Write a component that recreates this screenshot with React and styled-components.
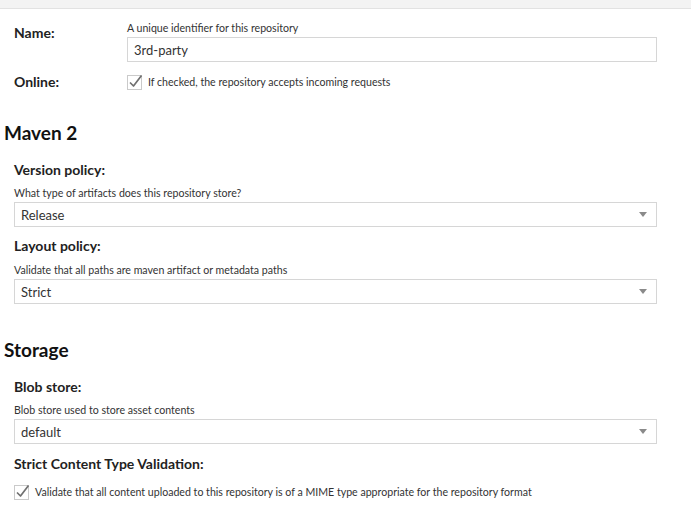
import React from 'react';
import styled, { createGlobalStyle } from 'styled-components';

const GlobalStyle = createGlobalStyle`
  html, body {
    margin: 0;
    padding: 0;
    background: #fff;
  }
  body {
    font-family: Lato, "Open Sans", Arial, sans-serif;
    color: #333;
  }
`;

const TopBar = styled.div`
  height: 8px;
  background: #f3f3f3;
  border-bottom: 1px solid #e2e2e2;
`;

const Page = styled.div`
  padding: 13px 34px 0 4px;
`;

const InlineRow = styled.div`
  display: grid;
  grid-template-columns: 113px 1fr;
  padding-left: 10px;
  margin-top: ${(p) => p.$mt || 0}px;
`;

const InlineLabel = styled.div`
  font-size: 14px;
  font-weight: 700;
  line-height: 16px;
  color: #222;
  margin-top: ${(p) => p.$mt || 0}px;
`;

const Field = styled.div`
  display: flex;
  flex-direction: column;
`;

const Helper = styled.div`
  font-size: 10.6px;
  line-height: 12px;
  color: #333;
  margin-bottom: 3px;
  margin-top: ${(p) => p.$mt || 0}px;
`;

const TextBox = styled.div`
  height: 23px;
  border: 1px solid #d6d6d6;
  display: flex;
  align-items: center;
  padding-left: 6px;
  font-size: 13px;
  color: #333;
`;

const CheckRow = styled.label`
  display: flex;
  align-items: center;
  gap: 5px;
  height: 16px;
  font-size: 10.6px;
  color: #333;
  margin-top: ${(p) => p.$mt || 0}px;
`;

const SectionTitle = styled.h2`
  margin: ${(p) => p.$mt || 0}px 0 0;
  font-size: 19px;
  line-height: 22px;
  font-weight: 700;
  color: #111;
`;

const Block = styled.div`
  padding-left: 10px;
  margin-top: ${(p) => p.$mt || 0}px;
`;

const SelectBox = styled.div`
  height: 23px;
  border: 1px solid #d6d6d6;
  display: flex;
  align-items: center;
  justify-content: space-between;
  padding: 0 8px 0 6px;
  font-size: 13px;
  color: #333;
`;

const Caret = styled.span`
  width: 0;
  height: 0;
  border-left: 4px solid transparent;
  border-right: 4px solid transparent;
  border-top: 5px solid #8a8a8a;
  margin-right: 1px;
`;

const Check = () => (
  <svg width="16" height="16" viewBox="0 0 16 16" style={{ flex: 'none' }}>
    <rect x="0.5" y="1.5" width="14" height="14" fill="#fff" stroke="#cacaca" />
    <path d="M3 8.5 L6.5 12 L14.5 1.5" fill="none" stroke="#707070" strokeWidth="1.7" strokeLinejoin="round" />
  </svg>
);

const Select = ({ value }) => (
  <SelectBox>
    <span>{value}</span>
    <Caret />
  </SelectBox>
);

export default function App() {
  return (
    <>
      <GlobalStyle />
      <TopBar />
      <Page>
        <InlineRow>
          <InlineLabel $mt={3}>Name:</InlineLabel>
          <Field>
            <Helper>A unique identifier for this repository</Helper>
            <TextBox>3rd-party</TextBox>
          </Field>
        </InlineRow>
        <InlineRow $mt={12}>
          <InlineLabel>Online:</InlineLabel>
          <CheckRow>
            <Check />
            If checked, the repository accepts incoming requests
          </CheckRow>
        </InlineRow>

        <SectionTitle $mt={32}>Maven 2</SectionTitle>
        <Block $mt={18}>
          <InlineLabel>Version policy:</InlineLabel>
          <Helper $mt={9}>What type of artifacts does this repository store?</Helper>
          <Select value="Release" />
        </Block>
        <Block $mt={11}>
          <InlineLabel>Layout policy:</InlineLabel>
          <Helper $mt={10}>Validate that all paths are maven artifact or metadata paths</Helper>
          <Select value="Strict" />
        </Block>

        <SectionTitle $mt={35}>Storage</SectionTitle>
        <Block $mt={18}>
          <InlineLabel>Blob store:</InlineLabel>
          <Helper $mt={9}>Blob store used to store asset contents</Helper>
          <Select value="default" />
        </Block>
        <Block $mt={12}>
          <InlineLabel>Strict Content Type Validation:</InlineLabel>
          <CheckRow $mt={12}>
            <Check />
            Validate that all content uploaded to this repository is of a MIME type appropriate for the repository format
          </CheckRow>
        </Block>
      </Page>
    </>
  );
}
